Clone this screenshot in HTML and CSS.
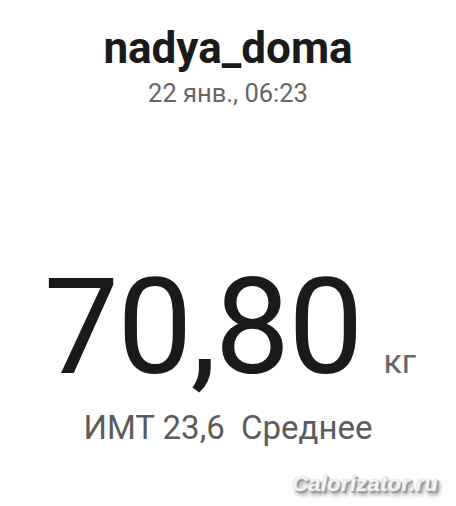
FILE: index.html
```html
<!DOCTYPE html>
<html lang="ru">

<head>
  <meta charset="UTF-8">
  <meta name="viewport" content="width=device-width, initial-scale=1.0">
  <title>Вес - nadya_doma</title>
  <link rel="stylesheet" href="styles.css">
</head>

<body>

  <header class="user">
    <h1 class="user-name">nadya_doma</h1>
    <p class="user-date">22 янв., 06:23</p>
  </header>

  <main class="weight">
    <div class="weight-row">
      <span class="weight-value">70,80</span>
      <span class="weight-unit">кг</span>
    </div>
    <p class="weight-bmi">ИМТ 23,6&nbsp; Среднее</p>
  </main>

  <footer class="mark">Calorizator.ru</footer>

</body>

</html>
```

FILE: styles.css
```css
* {
  box-sizing: border-box;
}

body {
  font-family: Roboto, "Noto Sans", sans-serif;
  background: #ffffff;
  color: #1a1a1a;
  margin: 0;
  padding: 0;
  width: 456px;
  height: 506px;
  overflow: hidden;
  display: flex;
  flex-direction: column;
  align-items: center;
}

.user {
  text-align: center;
  padding-top: 22px;
}

.user-name {
  margin: 0;
  font-size: 44px;
  font-weight: 700;
  line-height: 52px;
  color: #1a1a1a;
}

.user-date {
  margin: 4px 0 0;
  font-size: 25.5px;
  line-height: 30px;
  color: #666666;
}

.weight {
  text-align: center;
  margin-top: 153px;
}

.weight-row {
  display: flex;
  align-items: baseline;
  justify-content: center;
  line-height: 1;
}

.weight-value {
  font-size: 134px;
  font-weight: 400;
  letter-spacing: -2px;
  margin-left: 4px;
}

.weight-unit {
  font-size: 34px;
  color: #666666;
  margin-left: 22px;
}

.weight-bmi {
  margin: 13px 0 0;
  font-size: 33px;
  line-height: 40px;
  color: #5c5c5c;
}

.mark {
  position: absolute;
  right: 18px;
  bottom: 9px;
  font-family: "Liberation Sans", Arial, sans-serif;
  font-size: 22px;
  font-weight: 700;
  font-style: italic;
  letter-spacing: 0.3px;
  color: #f6f6f6;
  -webkit-text-stroke: 0.6px #e2e2e2;
  text-shadow: 1px 1px 0 #a8a8a8, 2px 2px 1px #8a8a8a, 3px 4px 4px rgba(0, 0, 0, 0.45);
}
```
